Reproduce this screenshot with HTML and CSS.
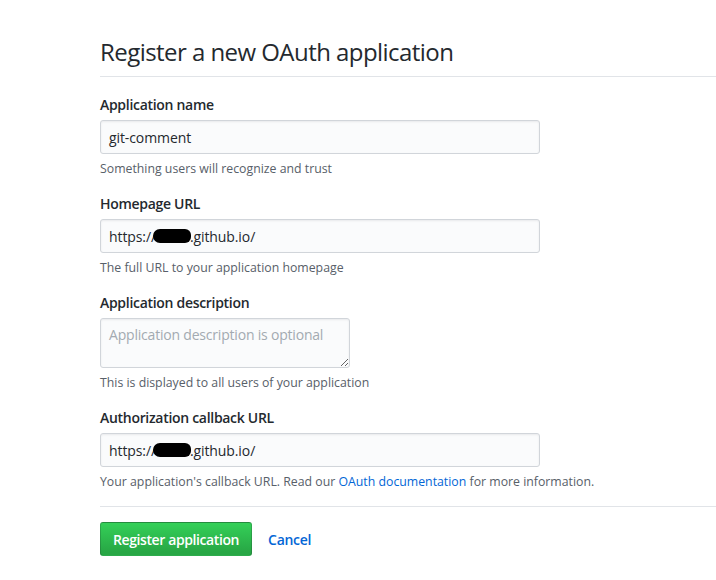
FILE: index.html
```html
<!DOCTYPE html>
<html>
<head>
<meta charset="utf-8">
<link rel="stylesheet" href="styles.css">
</head>
<body>
<div class="page">
  <h2 class="title">Register a new OAuth application</h2>
  <form class="form">
    <div class="group">
      <label class="label">Application name</label>
      <div class="input">git-comment</div>
      <p class="note">Something users will recognize and trust</p>
    </div>
    <div class="group">
      <label class="label">Homepage URL</label>
      <div class="input">https://<span class="blob"></span>.github.io/</div>
      <p class="note">The full URL to your application homepage</p>
    </div>
    <div class="group">
      <label class="label">Application description</label>
      <textarea class="textarea" placeholder="Application description is optional"></textarea>
      <p class="note">This is displayed to all users of your application</p>
    </div>
    <div class="group">
      <label class="label">Authorization callback URL</label>
      <div class="input">https://<span class="blob"></span>.github.io/</div>
      <p class="note">Your application's callback URL. Read our <a class="link" href="#">OAuth documentation</a> for more information.</p>
    </div>
    <div class="actions">
      <button type="button" class="btn">Register application</button>
      <a class="cancel" href="#">Cancel</a>
    </div>
  </form>
</div>
</body>
</html>
```
FILE: styles.css
```css
html, body {
  margin: 0;
  padding: 0;
  background: #fff;
}
body {
  font-family: "Open Sans", "Noto Sans", sans-serif;
  color: #24292e;
  font-size: 14px;
  overflow: hidden;
}
.page {
  padding: 37px 0 0 100px;
}
.title {
  margin: 0;
  font-size: 24px;
  font-weight: 400;
  line-height: 30px;
  padding-bottom: 9px;
  border-bottom: 1px solid #e1e4e8;
  letter-spacing: -0.55px;
}
.form {
  margin-top: 17px;
}
.group {
  margin-bottom: 15px;
  width: 440px;
}
.label {
  display: block;
  font-weight: 600;
  font-size: 14px;
  line-height: 21px;
  margin-bottom: 5px;
  letter-spacing: -0.3px;
}
.input {
  box-sizing: border-box;
  height: 34px;
  width: 440px;
  padding: 0 8px;
  display: flex;
  align-items: center;
  background: #fafbfc;
  border: 1px solid #d1d5da;
  border-radius: 3px;
  box-shadow: inset 0 1px 2px rgba(27,31,35,.075);
  font-size: 14px;
  letter-spacing: -0.1px;
}
.blob {
  display: inline-block;
  width: 38px;
  height: 14px;
  background: #000;
  border-radius: 7px 6px 6px 7px;
  margin: 0 -1px 0 -3px;
}
.textarea {
  display: block;
  box-sizing: border-box;
  width: 250px;
  height: 50px;
  padding: 6px 8px;
  background: #fafbfc;
  border: 1px solid #d1d5da;
  border-radius: 3px;
  box-shadow: inset 0 1px 2px rgba(27,31,35,.075);
  font-family: inherit;
  font-size: 14px;
  line-height: 20px;
  color: #24292e;
  margin: 0;
  letter-spacing: -0.2px;
}
.textarea::placeholder {
  color: #a3aab1;
}
.note {
  margin: 6px 0 0;
  font-size: 12.3px;
  line-height: 18px;
  color: #586069;
  white-space: nowrap;
}
.link {
  color: #0366d6;
  text-decoration: none;
}
.actions {
  margin-top: 10px;
  border-top: 1px solid #e1e4e8;
  padding-top: 15px;
  display: flex;
  align-items: center;
  gap: 16px;
}
.btn {
  box-sizing: border-box;
  height: 34px;
  padding: 0 12px;
  font-family: inherit;
  font-size: 14px;
  font-weight: 600;
  color: #fff;
  background: linear-gradient(-180deg, #34d058 0%, #28a745 90%);
  border: 1px solid rgba(27,31,35,.2);
  border-radius: 3px;
  letter-spacing: -0.4px;
}
.cancel {
  color: #0366d6;
  text-decoration: none;
  font-size: 14px;
  font-weight: 600;
  letter-spacing: -0.3px;
}
```
